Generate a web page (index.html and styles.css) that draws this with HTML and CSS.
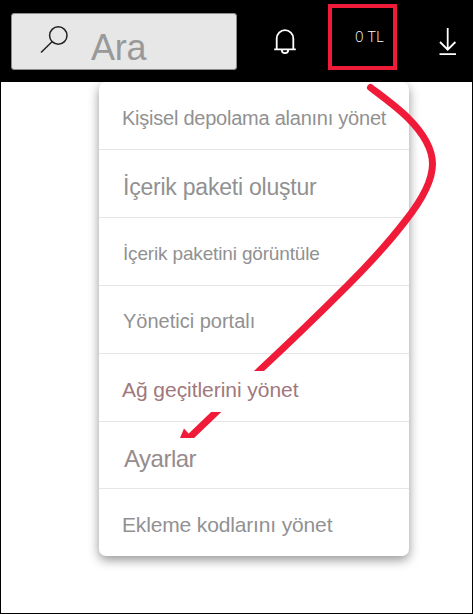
FILE: index.html
```html
<!DOCTYPE html>
<html lang="tr">
<head>
<meta charset="utf-8">
<title>Ayarlar</title>
<link rel="stylesheet" href="styles.css">
</head>
<body>
<div class="page">
  <header class="bar">
    <div class="search">
      <svg class="search-icon" width="28" height="28" viewBox="0 0 28 28"><circle cx="18.3" cy="9.5" r="8.7"/><path d="M12 15.8 1 26.5"/></svg>
      <span class="search-label">Ara</span>
    </div>
    <svg class="bell" width="22" height="26" viewBox="0 0 22 26"><path d="M2.7 20.3V9.5a8.3 8.3 0 0 1 16.6 0v10.8M0.2 20.3H21.8M7.8 21a3.2 3.2 0 0 0 6.4 0"/></svg>
    <div class="credit"><span>0 TL</span></div>
    <svg class="download" width="18" height="28" viewBox="0 0 18 28"><path d="M8.7 0V21.5M1 14 8.7 21.7 16.4 14M0.5 26.2H17"/></svg>
  </header>
  <main class="content">
    <ul class="menu">
      <li class="item storage"><span>Kişisel depolama alanını yönet</span></li>
      <li class="item create"><span>İçerik paketi oluştur</span></li>
      <li class="item view"><span>İçerik paketini görüntüle</span></li>
      <li class="item admin"><span>Yönetici portalı</span></li>
      <li class="item gateways"><span>Ağ geçitlerini yönet</span></li>
      <li class="item settings"><span>Ayarlar</span></li>
      <li class="item embed"><span>Ekleme kodlarını yönet</span></li>
    </ul>
  </main>
  <svg class="arrow" width="473" height="614" viewBox="0 0 473 614">
    <defs><clipPath id="visible"><path d="M0 0H473V371H0ZM0 412H473V438H0Z"/></clipPath></defs>
    <g clip-path="url(#visible)">
      <path class="stroke" d="M370.5 87.5C383 97 397 107 408 118C424 134 432.5 149 432.5 164C432.5 181 421 201 406 220C390 241 371 262 348 285C318 315 289 343 260 370L187 440"/>
      <path class="head" d="M184 428.5 189 434 194 438H180Z"/>
    </g>
  </svg>
</div>
</body>
</html>
```
FILE: styles.css
```css
* { box-sizing: border-box; }
body { margin: 0; font-family: "Liberation Sans", Arial, sans-serif; }
.page {
  position: relative;
  width: 473px;
  height: 614px;
  border: 1px solid #000;
  background: #fff;
  overflow: hidden;
}
.bar {
  display: flex;
  align-items: flex-start;
  height: 81px;
  background: #000;
}
.search {
  display: flex;
  width: 226px;
  height: 57px;
  margin: 12px 0 0 10px;
  padding-left: 28px;
  border: 1px solid #8c8c8c;
  border-radius: 3px;
  background: #e7e7e7;
}
svg { fill: none; flex: none; }
.search-icon { margin-top: 12px; stroke: #222; stroke-width: 1.5; }
.search-label {
  margin: 13px 0 0 23px;
  font-size: 36px;
  letter-spacing: -.3px;
  line-height: 42px;
  color: #999;
  white-space: nowrap;
}
.bell { margin: 28px 0 0 37px; stroke: #fff; stroke-width: 1.8; }
.credit {
  width: 69px;
  height: 66px;
  margin: 3px 0 0 32px;
  padding: 18px 0 0 23px;
  border: 4px solid #f01b38;
  color: #fff;
  font: 300 15px/20px "Open Sans", sans-serif;
  letter-spacing: .2px;
  white-space: nowrap;
}
.download { margin: 27px 0 0 42px; stroke: #fff; stroke-width: 1.8; }
.menu {
  width: 310px;
  margin: 0 0 0 98px;
  padding: 0;
  list-style: none;
  border-radius: 7px;
  background: #fff;
  box-shadow: 0 4px 11px rgba(0, 0, 0, .42);
}
.item {
  display: flex;
  height: 68px;
  padding-left: 23px;
  border-bottom: 1px solid #e6e6e6;
  color: #919191;
  font-size: 20px;
  line-height: 24px;
  white-space: nowrap;
}
.item:last-child { border-bottom: 0; }
.storage { padding-top: 24px; letter-spacing: -.24px; }
.create { padding: 25px 0 0 24px; font-size: 23px; letter-spacing: -.22px; }
.view { padding: 24px 0 0 24px; font-size: 19px; letter-spacing: -.16px; }
.admin { padding: 23px 0 0 24px; }
.gateways { padding-top: 24px; font-size: 21px; letter-spacing: -.05px; color: #a0787c; }
.settings { height: 67px; padding: 25px 0 0 25px; font-size: 24px; letter-spacing: -.5px; color: #968c8e; }
.embed { height: 67px; padding: 24px 0 0 23px; font-size: 21px; letter-spacing: -.15px; }
.arrow { position: absolute; left: -1px; top: -1px; }
.stroke { stroke: #f01b38; stroke-width: 7; stroke-linecap: round; }
.head { fill: #f01b38; }
```
